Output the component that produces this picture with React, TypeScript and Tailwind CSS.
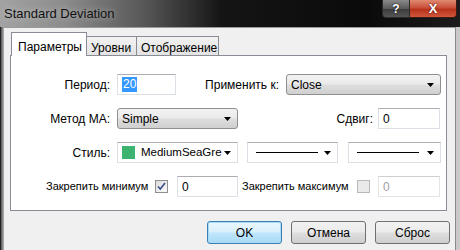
import React from "react";

function Arrow() {
  return (
    <svg width="7" height="4" viewBox="0 0 7 4" className="shrink-0">
      <path d="M0 0h7L3.5 4z" fill="#000" />
    </svg>
  );
}

function TextBox({ value, w, selected, disabled }: { value: string; w: string; selected?: boolean; disabled?: boolean }) {
  return (
    <div
      className={`${w} h-[21px] flex items-center pl-[4px] bg-white border border-[#dbdfe6] border-t-[#abadb3] ${
        disabled ? "text-[#a0a0a0] border-[#e4e4e4] border-t-[#cfcfcf]" : "text-black"
      }`}
    >
      {selected ? <span className="bg-[#3399ff] text-white px-[1px] leading-[15px]">{value}</span> : <span>{value}</span>}
    </div>
  );
}

function DropList({ value, w }: { value: string; w: string }) {
  return (
    <div
      className={`${w} h-[21px] flex items-center justify-between pl-[4px] pr-[6px] rounded-[3px] border border-[#8e8f8f] bg-[linear-gradient(#f2f2f2_0%,#ebebeb_45%,#dddddd_55%,#cfcfcf_100%)]`}
    >
      <span>{value}</span>
      <Arrow />
    </div>
  );
}

function LineCombo({ w, children }: { w: string; children: React.ReactNode }) {
  return (
    <div className={`${w} h-[21px] flex items-center justify-between pl-[4px] pr-[6px] bg-white border border-[#dbdfe6] border-t-[#abadb3]`}>
      {children}
      <Arrow />
    </div>
  );
}

function CheckBox({ checked, disabled }: { checked?: boolean; disabled?: boolean }) {
  return (
    <div
      className={`w-[13px] h-[13px] shrink-0 border flex items-center justify-center ${
        disabled ? "border-[#b8b8b8] bg-[#eaeaea]" : "border-[#8f8f8f] bg-[linear-gradient(135deg,#dcdcdc,#fbfbfb)]"
      }`}
    >
      {checked && (
        <svg width="9" height="9" viewBox="0 0 9 9">
          <path d="M1 4.5 3.3 7 8 1" stroke="#3b4e86" strokeWidth="1.6" fill="none" />
        </svg>
      )}
    </div>
  );
}

function Button({ label, primary }: { label: string; primary?: boolean }) {
  return (
    <div
      className={`w-[75px] h-[23px] flex items-center justify-center rounded-[3px] border ${
        primary
          ? "border-[#3c7fb1] bg-[linear-gradient(#eaf6fd_0%,#d9f0fc_45%,#bee6fd_55%,#a7d9f5_100%)] shadow-[inset_0_0_0_1px_#a6dcf7]"
          : "border-[#707070] bg-[linear-gradient(#f2f2f2_0%,#ebebeb_45%,#dddddd_55%,#cfcfcf_100%)]"
      }`}
    >
      {label}
    </div>
  );
}

export default function App() {
  return (
    <div className="w-[460px] h-[250px] overflow-hidden flex flex-col bg-[#1a1a1a] font-['Liberation_Sans',Arial,sans-serif] text-[12px] text-black">
      {/* title bar */}
      <div className="h-[27px] flex items-start bg-[linear-gradient(to_right,#a3a3a3_0%,#8c8c8c_14%,#555_32%,#151515_48%,#0a0a0a_80%,#1c1c1c_100%)]">
        <div className="pl-[4px] pt-[4px] text-[13px] text-[#111] [text-shadow:0_0_6px_rgba(255,255,255,0.5)]">Standard Deviation</div>
        <div className="flex-1" />
        <div className="flex mr-[3px]">
          <div className="w-[28px] h-[18px] flex items-center justify-center rounded-bl-[4px] border border-t-0 border-[#2a2a2a] bg-[linear-gradient(#8a8a8a,#5a5a5a_50%,#3a3a3a_51%,#555)] text-white font-bold text-[12px] [text-shadow:0_0_2px_#000]">
            ?
          </div>
          <div className="w-[47px] h-[18px] flex items-center justify-center rounded-br-[4px] border border-t-0 border-l-0 border-[#3a1a12] bg-[linear-gradient(#e08a70,#c9503a_45%,#b8321b_55%,#d0583c)] text-white font-bold text-[13px] [text-shadow:0_0_2px_#400]">
            X
          </div>
        </div>
      </div>

      <div className="flex flex-1">
        {/* left frame */}
        <div className="w-[4px] border-l border-[#222] bg-[linear-gradient(to_right,#555,#b5b5b5)]" />

        {/* client */}
        <div className="w-[451px] bg-[#f0f0f0] border-t border-[#9a9a9a] pt-[5px] pl-[6px]">
          {/* tabs */}
          <div className="flex items-end h-[23px] -mb-px relative z-10">
            <div className="w-[76px] h-[24px] ml-[1px] bg-white border border-b-0 border-[#898c95] pl-[6px] pt-[5px]">Параметры</div>
            <div className="w-[50px] h-[20px] bg-[linear-gradient(#f2f2f2,#e3e3e3)] border border-l-0 border-[#898c95] pl-[4px] pt-[2px]">Уровни</div>
            <div className="w-[82px] h-[20px] bg-[linear-gradient(#f2f2f2,#e3e3e3)] border border-l-0 border-[#898c95] pl-[4px] pt-[2px]">Отображение</div>
          </div>

          {/* panel */}
          <div className="w-[437px] h-[156px] bg-white border border-[#898c95] pt-[18px] flex flex-col gap-[13px]">
            <div className="flex items-center h-[21px]">
              <div className="w-[99px] text-right">Период:</div>
              <div className="ml-[7px]">
                <TextBox value="20" w="w-[59px]" selected />
              </div>
              <div className="w-[103px] text-right">Применить к:</div>
              <div className="ml-[7px]">
                <DropList value="Close" w="w-[155px]" />
              </div>
            </div>

            <div className="flex items-center h-[21px]">
              <div className="w-[99px] text-right">Метод MA:</div>
              <div className="ml-[7px]">
                <DropList value="Simple" w="w-[121px]" />
              </div>
              <div className="w-[135px] text-right">Сдвиг:</div>
              <div className="ml-[5px]">
                <TextBox value="0" w="w-[62px]" />
              </div>
            </div>

            <div className="flex items-center h-[21px]">
              <div className="w-[99px] text-right">Стиль:</div>
              <div className="ml-[7px]">
                <LineCombo w="w-[121px]">
                  <div className="flex items-center gap-[6px] min-w-0">
                    <div className="w-[13px] h-[13px] shrink-0 bg-[#3cb371]" />
                    <span className="text-[11.5px] whitespace-nowrap">MediumSeaGre</span>
                  </div>
                </LineCombo>
              </div>
              <div className="ml-[9px]">
                <LineCombo w="w-[91px]">
                  <div className="w-[62px] h-px bg-black ml-[4px]" />
                </LineCombo>
              </div>
              <div className="ml-[10px]">
                <LineCombo w="w-[93px]">
                  <div className="w-[62px] h-px bg-black ml-[4px]" />
                </LineCombo>
              </div>
            </div>

            <div className="flex items-center h-[21px]">
              <div className="ml-[35px] w-[106px] whitespace-nowrap text-[11px]">Закрепить минимум</div>
              <div className="ml-[3px]">
                <CheckBox checked />
              </div>
              <div className="ml-[9px]">
                <TextBox value="0" w="w-[61px]" />
              </div>
              <div className="ml-[4px] w-[111px] whitespace-nowrap text-[11px]">Закрепить максимум</div>
              <div className="ml-[4px]">
                <CheckBox disabled />
              </div>
              <div className="ml-[8px]">
                <TextBox value="0" w="w-[62px]" disabled />
              </div>
            </div>
          </div>

          {/* buttons */}
          <div className="flex justify-end gap-[9px] mt-[10px] pr-[5px]">
            <Button label="OK" primary />
            <Button label="Отмена" />
            <Button label="Сброс" />
          </div>
        </div>

        {/* right frame */}
        <div className="w-[5px] border-l border-[#8a8a8a] bg-[#c9c9c9]" />
      </div>
    </div>
  );
}
